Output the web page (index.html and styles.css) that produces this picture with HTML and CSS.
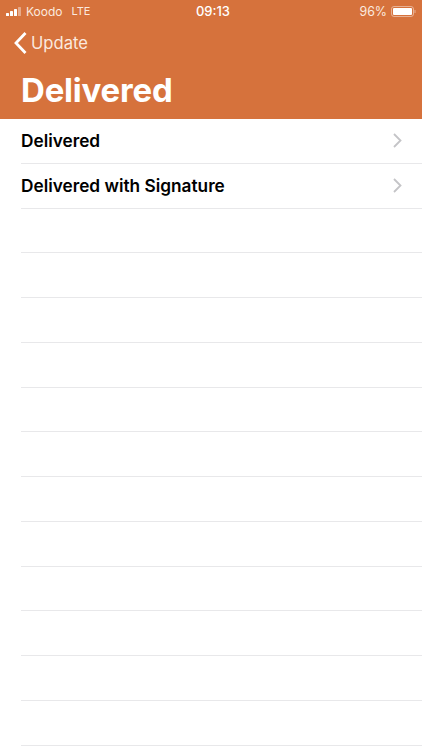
FILE: index.html
```html
<!DOCTYPE html>
<html lang="en">
<head>
<meta charset="utf-8">
<title>Delivered</title>
<link rel="stylesheet" href="styles.css">
</head>
<body>
<header class="head">
  <div class="status">
    <div class="status-left">
      <svg class="signal" width="17" height="9" viewBox="0 0 17 9"><rect x="0" y="6" width="3" height="3" rx=".6" fill="#fff"/><rect x="4" y="4" width="3" height="5" rx=".6" fill="#fff"/><rect x="8" y="2" width="3" height="7" rx=".6" fill="#fff"/><rect x="12" y="0" width="3" height="9" rx=".6" fill="#fff" opacity=".4"/></svg>
      <span>Koodo</span><span class="lte">LTE</span>
    </div>
    <div class="time">09:13</div>
    <div class="status-right">
      <span>96%</span>
      <svg width="25" height="11" viewBox="0 0 25 11"><rect x=".5" y=".5" width="22" height="10" rx="2.5" fill="none" stroke="#fff" stroke-opacity=".45"/><rect x="2" y="2" width="19" height="7" rx="1" fill="#fff"/><rect x="23.5" y="4" width="1" height="3" fill="#fff" opacity=".45"/></svg>
    </div>
  </div>
  <div class="nav">
    <svg width="15" height="24" viewBox="0 0 15 24"><path d="M12.5 2 3 12l9.5 10" fill="none" stroke="#fff" stroke-width="2.8"/></svg>
    <span>Update</span>
  </div>
  <h1>Delivered</h1>
</header>
<ul class="list">
  <li class="row"><span>Delivered</span><svg class="chev" width="9" height="15" viewBox="0 0 9 15"><path d="M1 1l6.5 6.5L1 14" fill="none" stroke="#c4c4c7" stroke-width="1.8"/></svg></li>
  <li class="row"><span>Delivered with Signature</span><svg class="chev" width="9" height="15" viewBox="0 0 9 15"><path d="M1 1l6.5 6.5L1 14" fill="none" stroke="#c4c4c7" stroke-width="1.8"/></svg></li>
  <li class="row"></li><li class="row"></li><li class="row"></li><li class="row"></li><li class="row"></li><li class="row"></li><li class="row"></li><li class="row"></li><li class="row"></li><li class="row"></li><li class="row"></li><li class="row"></li>
</ul>
</body>
</html>
```
FILE: styles.css
```css
* { box-sizing: border-box; }
html, body { margin: 0; height: 100%; overflow: hidden; background: #fff; }
body { font-family: Inter, "Liberation Sans", sans-serif; color: #000; }
.head { background: #d6723c; color: #fff; height: 119px; }
.status { height: 22px; display: grid; grid-template-columns: 1fr auto 1fr; align-items: center; padding: 0 6px; font-size: 12px; color: #fbe9df; }
.status-left { display: flex; align-items: center; gap: 3px; }
.lte { margin-left: 6px; font-size: 11px; }
.time { font-size: 13px; font-weight: 500; color: #fff; margin-left: 4px; }
.status-right { display: flex; justify-content: flex-end; align-items: center; gap: 4px; font-size: 12.4px; }
.nav { height: 42px; display: flex; align-items: center; gap: 3px; padding-left: 13px; font-size: 16.6px; color: #fbe9df; }
h1 { margin: 0; padding: 4px 0 0 21px; font-size: 33px; line-height: 44px; font-weight: 700; letter-spacing: -.2px; }
.list { list-style: none; margin: 0; padding: 0 0 0 21px; }
.row { height: 44.75px; border-bottom: 1px solid #e8e8ea; display: flex; align-items: center; justify-content: space-between; padding-right: 20px; font-size: 17.25px; font-weight: 600; }
```
